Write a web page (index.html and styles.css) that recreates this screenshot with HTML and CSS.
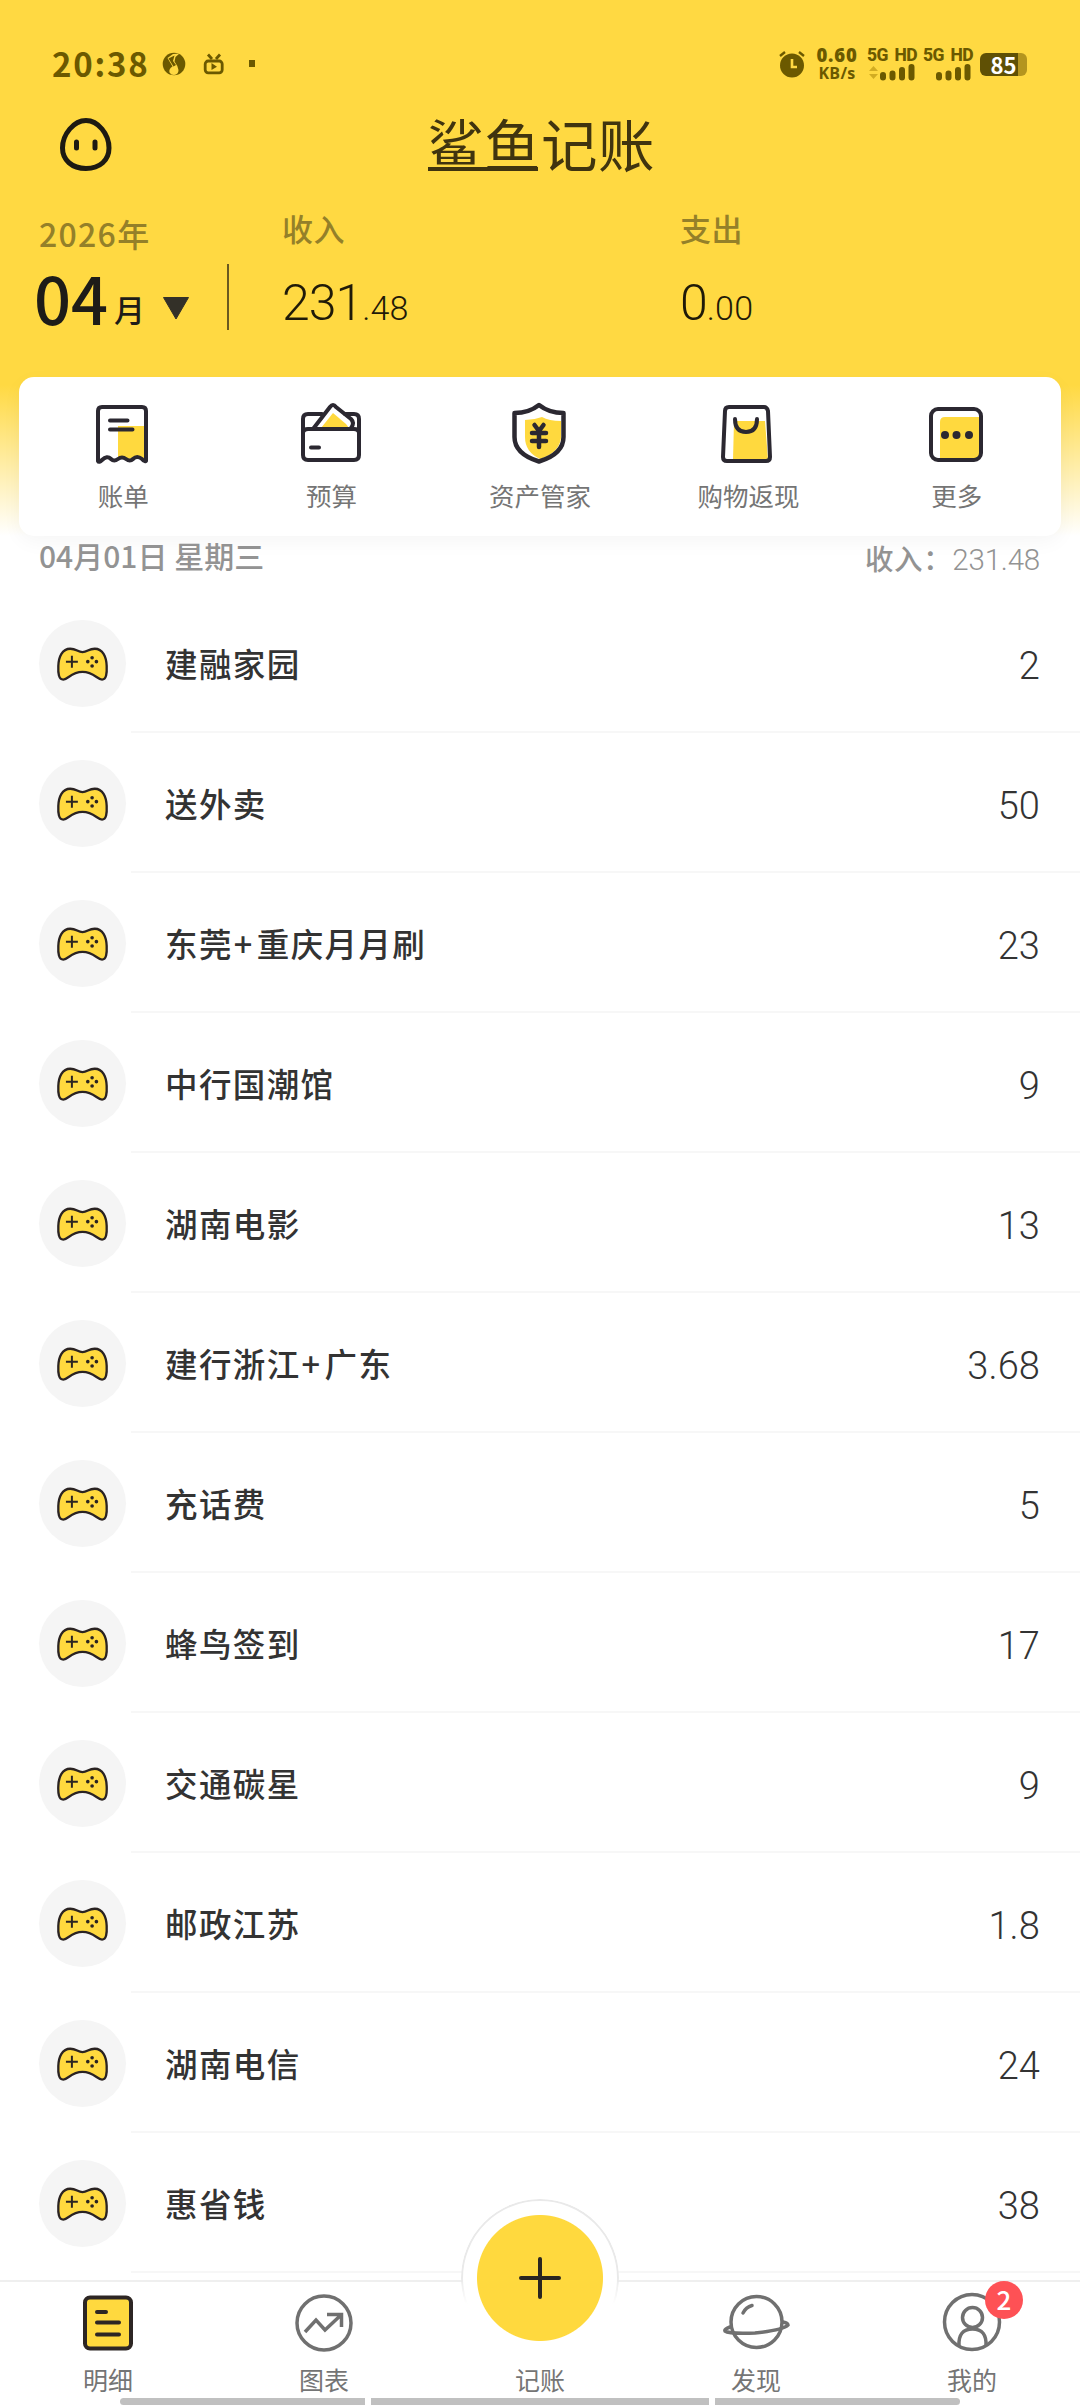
FILE: index.html
```html
<!DOCTYPE html>
<html lang="zh-CN">
<head>
<meta charset="utf-8">
<title>鲨鱼记账</title>
<link rel="stylesheet" href="styles.css">
</head>
<body>
<svg class="defs" width="0" height="0" aria-hidden="true">
  <symbol id="pad" viewBox="168 136 160 108">
    <path d="M190 237C176 237 174 218 175 196C176 168 187 144 211 144C230 144 233 154 248 154C263 154 266 144 285 144C309 144 320 168 321 196C322 218 320 237 307 237C293 237 282 214 248 214C214 214 204 237 190 237Z" fill="#ffd93e" stroke="#2a2322" stroke-width="7"/>
    <path d="M198 183H234M216 165V201" stroke="#2a2322" stroke-width="6"/>
    <g fill="#2a2322"><circle cx="277" cy="171" r="5.500"/><circle cx="277" cy="196" r="5.500"/><circle cx="264" cy="183" r="5.500"/><circle cx="290" cy="183" r="5.500"/></g>
  </symbol>
</svg>

<header class="top">
  <div class="status">
    <span class="clock">20:38</span>
    <svg class="s-app" viewBox="0 0 24 24" width="24" height="24"><circle cx="12" cy="12" r="11.3" fill="#6b5900"/><path d="M17.500 1.500L11 2L5.500 6L10.500 14.500Q6.500 17 7.500 20.500Q9 23 12 23Q16.500 22.500 16.500 18Q16 14 12.500 9.500L13.500 5Z" fill="#ffd942"/><path d="M12.500 3.500L6.500 6.500L11.500 14.500L14 13L11 9Z" fill="#6b5900"/></svg>
    <svg class="s-tv" viewBox="0 0 22 22" width="22" height="22" fill="none" stroke="#6b5900" stroke-width="2.8"><rect x="2.2" y="8" width="17" height="11.8" rx="3"/><path d="M5 1.5L9 6M17 1.5L13 6"/><path d="M8.5 10L14 13.8L8.5 17Z" fill="#6b5900" stroke="none"/></svg>
    <span class="s-dot"></span>
    <span class="grow"></span>
    <svg class="s-alarm" viewBox="0 0 27 27" width="27" height="27"><circle cx="13" cy="14.5" r="12" fill="#6b5900"/><path d="M1 5L6 1M25 5L20 1" stroke="#6b5900" stroke-width="2.4"/><path d="M13 8V16H18" fill="none" stroke="#ffd942" stroke-width="2.6"/></svg>
    <span class="speed"><b>0.60</b><i>KB/s</i></span>
    <span class="sim"><b>5G HD</b><svg viewBox="0 0 48 17" width="48" height="17"><path d="M2 7L6.500 2L11 7ZM2 10L6.500 15L11 10Z" fill="#d2ac22"/><path d="M16 11V13.500M25.500 9.500V13.500M35 6V13.500M44.500 3V13.500" stroke="#6b5900" stroke-width="6" stroke-linecap="round"/></svg></span>
    <span class="sim second"><b>5G HD</b><svg viewBox="0 0 48 17" width="48" height="17"><path d="M16 11V13.500M25.500 9.500V13.500M35 6V13.500M44.500 3V13.500" stroke="#6b5900" stroke-width="6" stroke-linecap="round"/></svg></span>
    <span class="battery"><b>85</b></span>
  </div>

  <div class="brand">
    <svg class="face" viewBox="0 0 54 56" width="54" height="56" fill="none" stroke="#1d1a12"><path d="M27 3.500C39 3.500 50 17 50 31C50 43 41 51.500 27 51.500C13 51.500 3.500 43 3.500 31C3.500 17 15 3.500 27 3.500Z" stroke-width="5"/><path d="M17.500 25V31M36 25V31" stroke-width="5" stroke-linecap="round"/></svg>
    <h1 class="logo"><span>鲨鱼</span>记账</h1>
  </div>

  <div class="summary">
    <div class="month">
      <div class="label year">2026年</div>
      <div class="pick"><b>04</b><span>月</span><svg viewBox="0 0 28 24" width="28" height="24"><path d="M1.500 1.500H26.500L14 23Z" fill="#333028" stroke="#333028" stroke-linejoin="round"/></svg></div>
    </div>
    <div class="rule"></div>
    <div class="total income"><div class="label">收入</div><div class="sum">231<small>.48</small></div></div>
    <div class="total"><div class="label">支出</div><div class="sum">0<small>.00</small></div></div>
  </div>

  <nav class="card">
    <a><svg viewBox="0 0 60 62" width="60" height="62" fill="none" stroke="#2b2831" stroke-width="4" stroke-linecap="round" stroke-linejoin="round"><path d="M26 23H52V57L43 54L34 57L26 54Z" fill="#ffd93e" stroke="none"/><path d="M6 58V8Q6 4 10 4H50Q54 4 54 8V58Q52 59 50 56Q45 52 41 56Q38 59 34 56Q30 53 26 56Q22 59 19 56Q15 52 10 57Q7 60 6 58Z"/><path d="M18 17.500H35.500M18 26.500H40.500"/></svg>账单</a>
    <a><svg viewBox="0 0 62 62" width="62" height="62" fill="none" stroke="#2b2831" stroke-width="4" stroke-linecap="round" stroke-linejoin="round"><path d="M21 25L33 10L46 21L49 25Z" fill="#ffd93e" stroke="none"/><path d="M22 11H8Q3 11 3 16V52Q3 57 8 57H54Q59 57 59 52V16Q59 11 54 11H45"/><path d="M13 26L30 4Q33 0 36 4L51 16Q55 20 51 25"/><path d="M3 29Q4 26 8 26H54Q58 26 59 29M11 44.500H19"/></svg>预算</a>
    <a><svg viewBox="0 0 62 62" width="62" height="62" fill="none" stroke="#2b2831" stroke-width="4.500" stroke-linejoin="round"><path d="M17 17Q26 17 34 14Q41 18 53 18V35Q51 50 32 56Q17 49 17 34Z" fill="#ffd93e" stroke="none"/><path d="M31 2Q41 10 55.500 10V34Q55.500 51 31 58.500Q6.500 51 6.500 34V10Q21 10 31 2Z"/><path d="M26.500 22L31 28L35.500 22M31 28V44M24 30H38M24 38H38" stroke-width="4.500" stroke-linecap="round"/></svg>资产管家</a>
    <a><svg viewBox="0 0 60 62" width="60" height="62" fill="none" stroke="#2b2831" stroke-width="4" stroke-linecap="round" stroke-linejoin="round"><path d="M17 18H48L51 57H16Z" fill="#ffd93e" stroke="none"/><path d="M12 4H47Q50 4 51 8L53 54Q53 58 49 58H10Q6 58 6 54L8 8Q8 4 12 4Z"/><path d="M18 16Q18 29 29 29Q40 29 40 16"/></svg>购物返现</a>
    <a><svg viewBox="0 0 60 62" width="60" height="62"><path d="M14 19Q14 14 19 14H53V57H14Z" fill="#ffd93e"/><rect x="5" y="6" width="50" height="51" rx="7" fill="none" stroke="#2b2831" stroke-width="4"/><g fill="#2b2831"><circle cx="19" cy="32" r="4"/><circle cx="30.500" cy="32" r="4"/><circle cx="43" cy="32" r="4"/></g></svg>更多</a>
  </nav>
</header>

<main>
  <div class="day"><span>04月01日 星期三</span><span class="day-sum">收入：<em>231.48</em></span></div>
  <ul class="list">
    <li><span class="dot"><svg><use href="#pad"/></svg></span><div><span>建融家园</span><em>2</em></div></li>
    <li><span class="dot"><svg><use href="#pad"/></svg></span><div><span>送外卖</span><em>50</em></div></li>
    <li><span class="dot"><svg><use href="#pad"/></svg></span><div><span>东莞<i>+</i>重庆月月刷</span><em>23</em></div></li>
    <li><span class="dot"><svg><use href="#pad"/></svg></span><div><span>中行国潮馆</span><em>9</em></div></li>
    <li><span class="dot"><svg><use href="#pad"/></svg></span><div><span>湖南电影</span><em>13</em></div></li>
    <li><span class="dot"><svg><use href="#pad"/></svg></span><div><span>建行浙江<i>+</i>广东</span><em>3.68</em></div></li>
    <li><span class="dot"><svg><use href="#pad"/></svg></span><div><span>充话费</span><em>5</em></div></li>
    <li><span class="dot"><svg><use href="#pad"/></svg></span><div><span>蜂鸟签到</span><em>17</em></div></li>
    <li><span class="dot"><svg><use href="#pad"/></svg></span><div><span>交通碳星</span><em>9</em></div></li>
    <li><span class="dot"><svg><use href="#pad"/></svg></span><div><span>邮政江苏</span><em>1.8</em></div></li>
    <li><span class="dot"><svg><use href="#pad"/></svg></span><div><span>湖南电信</span><em>24</em></div></li>
    <li><span class="dot"><svg><use href="#pad"/></svg></span><div><span>惠省钱</span><em>38</em></div></li>
  </ul>
</main>

<footer class="tabs">
  <div class="fab"><svg viewBox="0 0 46 46" width="46" height="46"><path d="M4 23H42M23 4V42" stroke="#2a2620" stroke-width="4" stroke-linecap="round"/></svg></div>
  <a><svg viewBox="0 0 60 62" width="60" height="62" stroke="#2d2624" stroke-width="4" stroke-linecap="round"><rect x="7" y="5.500" width="46" height="51" rx="5" fill="#ffd93e"/><path d="M19 20H28M19 30.500H41M19 42.500H41"/></svg>明细</a>
  <a><svg viewBox="0 0 60 62" width="60" height="62" fill="none" stroke="#707070" stroke-width="3.500"><circle cx="30" cy="31" r="27"/><path d="M11 40L22 28L31 38L47 23M33 22.500H47.500V35"/></svg>图表</a>
  <a>记账</a>
  <a><svg viewBox="0 0 70 62" width="70" height="62" fill="none" stroke="#707070" stroke-width="3.500" stroke-linecap="round"><circle cx="35.500" cy="30" r="25.500"/><path d="M22 21Q25 15 31 13.500"/><path d="M9 35Q3 37 4 39Q8 42 34 41Q62 38 67 33Q67 31 62 30"/></svg>发现</a>
  <a><svg viewBox="0 0 60 62" width="60" height="62" fill="none" stroke="#707070" stroke-width="3.500"><circle cx="30" cy="30" r="27.500"/><circle cx="30.500" cy="25.500" r="10"/><path d="M17 54Q16 37 30.500 37Q45 37 44 54"/></svg>我的<span class="badge">2</span></a>
  <div class="home"><i></i><i></i><i></i></div>
</footer>
</body>
</html>
```
FILE: styles.css
```css
* { box-sizing: border-box; margin: 0; padding: 0; }
body {
  width: 1080px; height: 2408px; overflow: hidden;
  display: flex; flex-direction: column;
  background: #fff; color: #333;
  font-family: "Noto Sans CJK SC", sans-serif;
}
.defs { display: none; }
svg { display: block; flex: none; overflow: visible; }
em, i { font-style: normal; }

.top {
  height: 536px;
  background: linear-gradient(#ffd942 0, #ffd942 385px, #fff 536px);
  display: flex; flex-direction: column; align-items: center;
}

/* status bar */
.status {
  width: 1080px; height: 110px; padding: 18px 53px 0 52px;
  display: flex; align-items: center; color: #6b5900;
}
.clock { font-size: 33px; font-weight: 700; letter-spacing: 1.8px; line-height: 36px; width: 110px; margin-top: -2px; }
.s-tv { margin-left: 17px; }
.s-dot { width: 6px; height: 7px; margin: -2px 0 0 24px; background: #6b5900; }
.grow { flex: 1; }
.s-alarm { margin-right: 9px; margin-top: 1px; }
.speed { width: 44px; display: flex; flex-direction: column; align-items: center; font-family: "Open Sans", sans-serif; font-weight: 700; line-height: 18px; margin-top: -1px; }
.speed b { font-size: 18.5px; letter-spacing: .8px; }
.speed i { font-size: 16px; letter-spacing: .3px; }
.sim { width: 48px; margin-left: 8px; margin-top: -1px; }
.sim b { display: block; font-family: Roboto, sans-serif; font-weight: 800; font-size: 17.5px; line-height: 17px; white-space: nowrap; letter-spacing: -.6px; word-spacing: 3px; }
.battery {
  width: 47px; height: 23px; margin-left: 9px; border-radius: 6px;
  background: linear-gradient(90deg, #5f5005 0 38px, #b4951e 38px);
  color: #fff; display: flex; align-items: center; justify-content: center;
}
.battery b { font-size: 22px; line-height: 23px; }

.brand { width: 1080px; height: 84px; display: flex; padding-left: 59px; }
.face { margin-top: 7px; }
.logo { margin: -5px 0 0 314px; font-size: 56.500px; font-weight: 400; line-height: 74px; color: #40340f; letter-spacing: .5px; }
.logo span { display: inline-block; height: 66px; line-height: 74px; background: linear-gradient(#40340f, #40340f) 1px 100% / 110px 4px no-repeat; }

/* month and totals */
.summary { width: 1080px; height: 183px; display: flex; }
.month { width: 228px; padding: 19px 0 0 36px; }
.label { font-size: 31px; line-height: 40px; color: #948029; letter-spacing: .5px; font-weight: 500; }
.year { padding-left: 3px; font-size: 32px; letter-spacing: 1.3px; }
.pick { display: flex; align-items: baseline; color: #1e1c18; height: 66px; line-height: 66px; margin-top: 11px; }
.pick b { font-size: 65px; font-weight: 500; width: 80px; margin-left: -2px; }
.pick span { font-size: 31px; font-weight: 500; width: 48px; margin-top: -4px; transform: translateY(-3px); }
.pick svg { transform: translateY(-5px); }
.rule { width: 2px; height: 66px; margin-top: 70px; margin-left: -1px; background: #6a5920; }
.total { flex: 1; padding-top: 14px; }
.income { flex: none; width: 397px; margin-left: 53px; }
.income + .total { padding-left: 1px; }
.sum { font-family: Roboto, sans-serif; font-weight: 300; font-size: 50px; line-height: 60px; margin-top: 25px; color: #1f1a08; letter-spacing: -1px; }
.sum small { font-size: 34px; letter-spacing: .2px; }

/* shortcuts */
.card {
  width: 1042px; height: 159px; flex: none; border-radius: 15px;
  background: #fff; box-shadow: 0 6px 20px rgba(0, 0, 0, .04);
  display: flex;
}
.card a { flex: 1; display: flex; flex-direction: column; align-items: center; padding-top: 26px; font-size: 25.5px; line-height: 38px; color: #757575; }
.card svg { margin-bottom: 11px; margin-left: -2px; }

/* day header and records */
.day { height: 57px; padding: 0 40px 0 39px; display: flex; justify-content: space-between; font-size: 30px; line-height: 39px; color: #939393; font-weight: 500; }
.day-sum { font-size: 28.5px; line-height: 43px; letter-spacing: .6px; }
.day em { font-family: Roboto, sans-serif; font-weight: 300; font-size: 29.5px; letter-spacing: -.2px; }
.list { list-style: none; }
.list li { height: 140px; padding-left: 39px; display: flex; }
.dot { width: 87px; height: 87px; margin-top: 27px; border-radius: 50%; background: #f5f5f5; display: flex; align-items: center; justify-content: center; }
.dot svg { width: 53px; height: 36px; }
.list div {
  flex: 1; margin-left: 5px; padding: 0 40px 0 34px; border-bottom: 2px solid #f7f7f7;
  display: flex; align-items: center; justify-content: space-between;
  font-size: 32.500px; font-weight: 500; letter-spacing: 1.4px;
}
.list i { margin: 0 3px 0 1px; }
.list em { font-family: Roboto, sans-serif; font-weight: 300; font-size: 38px; letter-spacing: .1px; padding-top: 7px; }

/* tab bar */
.tabs { position: relative; margin-top: 7px; height: 128px; border-top: 2px solid #efefef; background: #fff; display: flex; }
.tabs a { position: relative; flex: 1; display: flex; flex-direction: column; align-items: center; justify-content: flex-end; padding-bottom: 10px; font-size: 25px; line-height: 38px; color: #757575; }
.tabs a svg { margin-bottom: 6px; }
.fab {
  position: absolute; z-index: 1; left: 461px; top: -83px; width: 158px; height: 158px; border-radius: 50%;
  display: flex; align-items: center; justify-content: center;
  background: radial-gradient(circle, #ffd93e 62.5px, #fff 63.5px 77px, transparent 77px);
}
.fab::before {
  content: ""; position: absolute; inset: 0; border: 2px solid #e9e9e9; border-radius: 50%;
  -webkit-mask: linear-gradient(#000 78px, transparent 105px);
}
.badge {
  position: absolute; left: 121px; top: -1px; width: 38px; height: 38px; border-radius: 50%;
  background: #fe5155; color: #fff; font-size: 26px; font-weight: 500; line-height: 36px; text-align: center;
}
.home { position: absolute; left: 120px; bottom: 3px; width: 840px; height: 7px; display: grid; grid-template-columns: 245px 338px 245px; gap: 6px; }
.home i { background: #c0c0c0; }
.home i:first-child { border-radius: 4px 0 0 4px; }
.home i:last-child { border-radius: 0 4px 4px 0; }
```
